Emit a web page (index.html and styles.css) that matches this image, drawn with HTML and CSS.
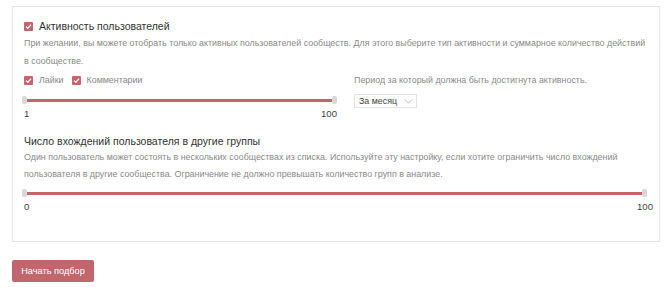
FILE: index.html
```html
<!DOCTYPE html>
<html lang="ru">
<head>
<meta charset="utf-8">
<link rel="stylesheet" href="styles.css">
</head>
<body>
<div class="page">
  <div class="card">
    <div class="head">
      <span class="cb"><svg viewBox="0 0 9 9" width="9" height="9"><path d="M2 4.6 L3.8 6.3 L7 2.8" fill="none" stroke="#fff" stroke-width="1.3"/></svg></span>
      <span class="title">Активность пользователей</span>
    </div>
    <p class="desc">При желании, вы можете отобрать только активных пользователей сообществ. Для этого выберите тип активности и суммарное количество действий<br>в сообществе.</p>
    <div class="cols">
      <div class="left">
        <div class="opts">
          <label class="opt"><span class="cb"><svg viewBox="0 0 9 9" width="9" height="9"><path d="M2 4.6 L3.8 6.3 L7 2.8" fill="none" stroke="#fff" stroke-width="1.3"/></svg></span>Лайки</label>
          <label class="opt"><span class="cb"><svg viewBox="0 0 9 9" width="9" height="9"><path d="M2 4.6 L3.8 6.3 L7 2.8" fill="none" stroke="#fff" stroke-width="1.3"/></svg></span>Комментарии</label>
        </div>
        <div class="slider"><span class="handle"></span><span class="track"></span><span class="handle"></span></div>
        <div class="labels"><span>1</span><span>100</span></div>
      </div>
      <div class="right">
        <div class="plabel">Период за который должна быть достигнута активность.</div>
        <div class="select">За месяц <svg viewBox="0 0 10 6" width="9" height="5"><path d="M0.5 0.5 L5 5 L9.5 0.5" fill="none" stroke="#aaa" stroke-width="0.9"/></svg></div>
      </div>
    </div>
    <div class="title title2">Число вхождений пользователя в другие группы</div>
    <p class="desc desc2">Один пользователь может состоять в нескольких сообществах из списка. Используйте эту настройку, если хотите ограничить число вхождений пользователя в другие сообщества. Ограничение не должно превышать количество групп в анализе.</p>
    <div class="slider slider2"><span class="handle"></span><span class="track"></span><span class="handle"></span></div>
    <div class="labels labels2"><span>0</span><span>100</span></div>
  </div>
  <button class="btn">Начать подбор</button>
</div>
</body>
</html>
```
FILE: styles.css
```css
* { box-sizing: border-box; }
html, body { margin: 0; padding: 0; background: #fff; }
body { font-family: "Liberation Sans", Arial, sans-serif; color: #333; }
.page { padding: 6px 10px 0 12px; }
.card {
  border: 1px solid #e6e6e6;
  padding: 12px 6px 28px 11px;
}
.head { display: flex; align-items: center; gap: 6px; height: 14px; }
.cb {
  display: inline-flex; width: 9px; height: 9px; background: #c2656c;
  border-radius: 1px; flex: none;
}
.title { font-size: 10.5px; line-height: 14px; color: #333; }
.desc { margin: 1px 0 0; font-size: 8.9px; line-height: 18px; color: #8a8a8a; }
.cols { display: flex; gap: 17px; margin-top: 3px; }
.left { width: 313px; flex: none; }
.opts { display: flex; gap: 8px; height: 14px; align-items: center; }
.opt { display: flex; align-items: center; gap: 6px; font-size: 8.9px; color: #888; }
.slider { display: flex; align-items: center; height: 10px; margin: 8px 0 0 -2px; }
.handle { width: 5px; height: 8px; background: #d8d8d8; border-radius: 2px; flex: none; position: relative; z-index: 1; }
.track { flex: 1; height: 3px; background: #c2656c; margin: 0 -1px; }
.labels { display: flex; justify-content: space-between; margin-top: 3px; font-size: 9.6px; line-height: 12px; color: #444; }
.plabel { font-size: 8.9px; line-height: 14px; color: #8a8a8a; }
.select {
  display: inline-flex; align-items: center; gap: 7px; margin-top: 7px;
  height: 14px; padding: 0 3px 0 4px; border: 1px solid #e3e3e3;
  font-size: 8.9px; color: #444;
}
.title2 { margin-top: 14px; }
.desc2 { line-height: 17px; }
.slider2 { margin-top: 5px; margin-right: 6px; }
.labels2 { margin-top: 3px; }
.btn {
  display: block; margin-top: 18px; width: 82px; height: 22px;
  background: #c2666d; color: #fff; border: none; border-radius: 2px;
  font-family: "Liberation Sans", Arial, sans-serif; font-size: 9.2px; padding: 0;
}
```
